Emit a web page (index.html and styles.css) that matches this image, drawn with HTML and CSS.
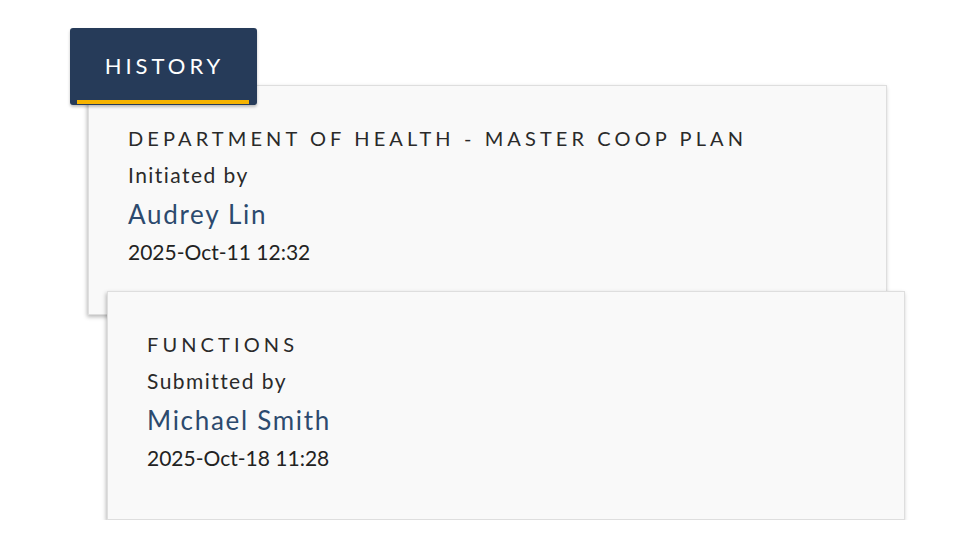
FILE: index.html
```html
<!DOCTYPE html>
<html>
<head>
<meta charset="utf-8">
<link rel="stylesheet" href="styles.css">
</head>
<body>
<div class="history">
  <div class="tab"><span class="tab-label">HISTORY</span></div>
  <div class="card card-first">
    <div class="title">DEPARTMENT OF HEALTH - MASTER COOP PLAN</div>
    <div class="label">Initiated by</div>
    <div class="name">Audrey Lin</div>
    <div class="date">2025-Oct-11 12:32</div>
  </div>
  <div class="card card-second">
    <div class="title">FUNCTIONS</div>
    <div class="label">Submitted by</div>
    <div class="name">Michael Smith</div>
    <div class="date">2025-Oct-18 11:28</div>
  </div>
</div>
</body>
</html>
```
FILE: styles.css
```css
html, body {
  margin: 0;
  padding: 0;
  background: #ffffff;
  font-family: Lato, "Open Sans", sans-serif;
}
.history {
  padding: 28px 0 0 70px;
  display: flex;
  flex-direction: column;
  align-items: flex-start;
}
.tab {
  position: relative;
  z-index: 2;
  width: 187px;
  height: 77px;
  box-sizing: border-box;
  background: #263b59;
  border-radius: 3px;
  box-shadow: 0 2px 3px rgba(0,0,0,0.25);
  display: flex;
  align-items: center;
  justify-content: center;
  padding-bottom: 2px;
}
.tab::after {
  content: "";
  position: absolute;
  left: 7px;
  right: 8px;
  bottom: 1px;
  height: 4px;
  background: #f6b300;
}
.tab-label {
  color: #ffffff;
  font-size: 22px;
  letter-spacing: 4px;
  margin-right: -4px;
  margin-left: -2px;
}
.card {
  position: relative;
  box-sizing: border-box;
  width: 799px;
  height: 230px;
  background: #f9f9f9;
  border: 1px solid #dedede;
  box-shadow: -1px 2px 4px rgba(0,0,0,0.28);
  padding: 39px 0 0 39px;
  display: flex;
  flex-direction: column;
}
.card-first {
  z-index: 1;
  margin: -20px 0 0 18px;
}
.card-second {
  z-index: 1;
  width: 798px;
  height: 229px;
  margin: -24px 0 0 37px;
}
.title {
  font-size: 20px;
  letter-spacing: 4.1px;
  color: #2a2a2a;
  line-height: 38px;
  height: 38px;
  margin-top: -6px;
}
.label {
  font-size: 21px;
  color: #2a2a2a;
  line-height: 36px;
  height: 37px;
  letter-spacing: 1.45px;
}
.name {
  font-size: 26px;
  color: #2c4a6e;
  line-height: 40px;
  height: 40px;
  letter-spacing: 1.7px;
}
.date {
  font-size: 21px;
  color: #222222;
  line-height: 36px;
  height: 36px;
  letter-spacing: 0;
}
```
